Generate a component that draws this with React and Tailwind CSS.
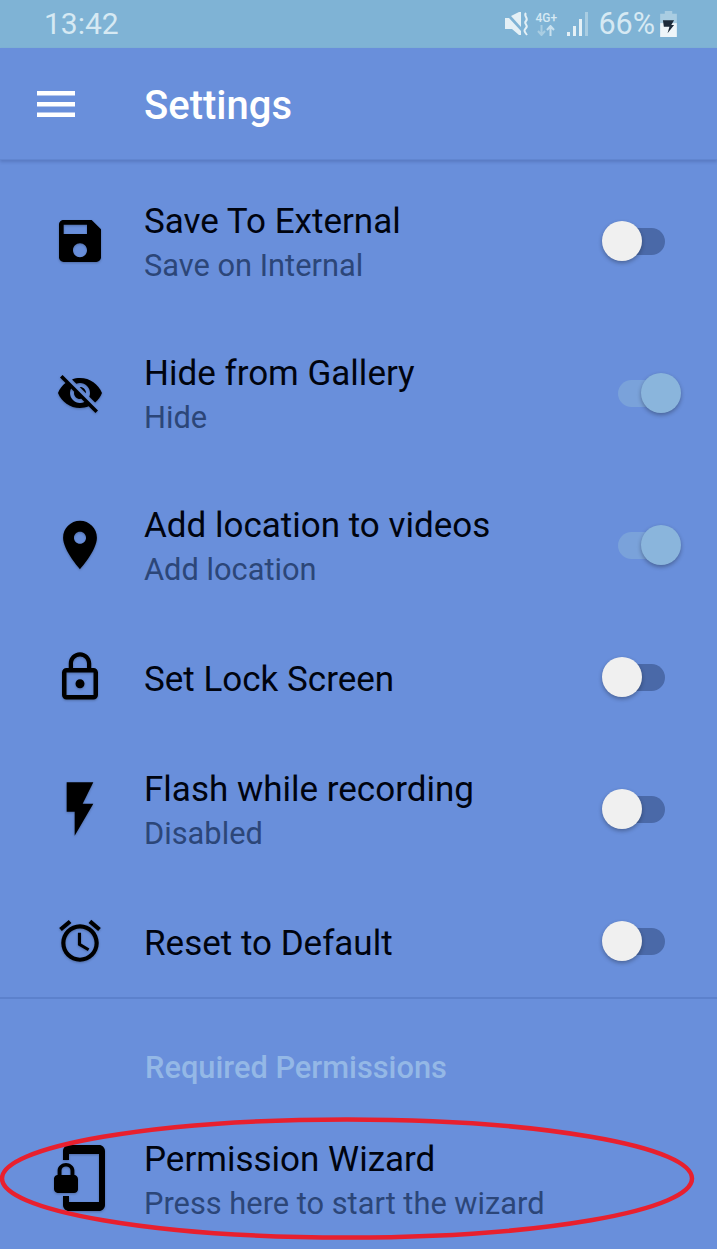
import React from 'react';

const ICONS = {
  save: 'M17 3H5c-1.11 0-2 .9-2 2v14c0 1.1.89 2 2 2h14c1.1 0 2-.9 2-2V7l-4-4zm-5 16c-1.66 0-3-1.34-3-3s1.34-3 3-3 3 1.34 3 3-1.34 3-3 3zm3-10H5V5h10v4z',
  hide: 'M12 7c2.76 0 5 2.24 5 5 0 .65-.13 1.26-.36 1.83l2.92 2.92c1.51-1.26 2.7-2.89 3.43-4.75-1.73-4.39-6-7.5-11-7.5-1.4 0-2.74.25-3.98.7l2.16 2.16C10.74 7.13 11.35 7 12 7zM2 4.27l2.28 2.28.46.46C3.08 8.3 1.78 10.02 1 12c1.73 4.39 6 7.5 11 7.5 1.55 0 3.03-.3 4.38-.84l.42.42L19.73 22 21 20.73 3.27 3 2 4.27zM7.53 9.8l1.55 1.55c-.05.21-.08.43-.08.65 0 1.66 1.34 3 3 3 .22 0 .44-.03.65-.08l1.55 1.55c-.67.33-1.41.53-2.2.53-2.76 0-5-2.24-5-5 0-.79.2-1.53.53-2.2zm4.31-.78l3.15 3.15.02-.16c0-1.66-1.34-3-3-3l-.17.01z',
  place: 'M12 2C8.13 2 5 5.13 5 9c0 5.25 7 13 7 13s7-7.75 7-13c0-3.87-3.13-7-7-7zm0 9.5c-1.38 0-2.5-1.12-2.5-2.5s1.12-2.5 2.5-2.5 2.5 1.12 2.5 2.5-1.12 2.5-2.5 2.5z',
  lock: 'M12 17c1.1 0 2-.9 2-2s-.9-2-2-2-2 .9-2 2 .9 2 2 2zm6-9h-1V6c0-2.76-2.24-5-5-5S7 3.24 7 6v2H6c-1.1 0-2 .9-2 2v10c0 1.1.9 2 2 2h12c1.1 0 2-.9 2-2V10c0-1.1-.9-2-2-2zM8.9 6c0-1.71 1.39-3.1 3.1-3.1s3.1 1.39 3.1 3.1v2H8.9V6zM18 20H6V10h12v10z',
  flash: 'M7 2v11h3v9l7-12h-4l4-8z',
  alarm: 'M22 5.72l-4.6-3.86-1.29 1.53 4.6 3.86L22 5.72zM7.88 3.39L6.6 1.86 2 5.71l1.29 1.53 4.59-3.85zM12.5 8H11v6l4.75 2.85.75-1.23-4-2.37V8zM12 4c-4.97 0-9 4.03-9 9s4.02 9 9 9c4.97 0 9-4.03 9-9s-4.03-9-9-9zm0 16c-3.87 0-7-3.13-7-7s3.13-7 7-7 7 3.13 7 7-3.13 7-7 7z',
  wizard: 'M19 1H9c-1.1 0-2 .9-2 2v3h2V4h10v16H9v-2H7v3c0 1.1.9 2 2 2h10c1.1 0 2-.9 2-2V3c0-1.1-.9-2-2-2zm-8.2 10V9.5C10.8 8.1 9.4 7 8 7S5.2 8.1 5.2 9.5V11c-.6 0-1.2.6-1.2 1.2v3.5c0 .7.6 1.3 1.2 1.3h5.5c.7 0 1.3-.6 1.3-1.2v-3.5c0-.7-.6-1.3-1.2-1.3zm-1.3 0h-3V9.5c0-.8.7-1.3 1.5-1.3s1.5.5 1.5 1.3V11z',
};

const rows = [
  { icon: 'save', size: 'w-14 h-14', title: 'Save To External', sub: 'Save on Internal', on: false },
  { icon: 'hide', size: 'w-12 h-12', title: 'Hide from Gallery', sub: 'Hide', on: true },
  { icon: 'place', size: 'w-[58px] h-[58px]', title: 'Add location to videos', sub: 'Add location', on: true },
  { icon: 'lock', size: 'w-[54px] h-[54px]', title: 'Set Lock Screen', on: false },
  { icon: 'flash', size: 'w-16 h-16', title: 'Flash while recording', sub: 'Disabled', on: false },
  { icon: 'alarm', size: 'w-[50px] h-[50px]', title: 'Reset to Default', on: false },
];

const Icon = ({ name, className }) => (
  <svg viewBox="0 0 24 24" fill="#000" className={`${className} drop-shadow-[0_1px_1px_rgba(0,0,0,0.25)]`}>
    <path d={ICONS[name]} />
  </svg>
);

const Switch = ({ on }) => (
  <div className={`relative w-[47px] h-[27px] rounded-full ${on ? 'bg-[#7aa2da]' : 'bg-[#4a69a8]'}`}>
    <div
      className={`absolute top-[-7px] w-10 h-10 rounded-full shadow-[0_2px_4px_rgba(0,0,0,0.3)] ${
        on ? 'left-[23px] bg-[#8ab5dc]' : 'left-[-16px] bg-[#f0f0f0]'
      }`}
    />
  </div>
);

const Row = ({ icon, size, title, sub, on }) => (
  <div className={`flex items-center pl-12 ${sub ? 'h-[152px]' : 'h-[112px]'}`}>
    <div className="w-16 flex items-center justify-center shrink-0">
      <Icon name={icon} className={size} />
    </div>
    <div className="ml-[32px] flex-1 pt-[5px]">
      <div className="text-[35px] leading-[44px] text-[#00040f]">{title}</div>
      {sub && <div className="text-[30.8px] leading-[44px] text-[#2c4678]">{sub}</div>}
    </div>
    <div className="mr-[52px]">
      <Switch on={on} />
    </div>
  </div>
);

const StatusBar = () => (
  <div className="h-12 bg-[#7fb3d5] flex items-center justify-between pl-[44px] pr-[40px] text-[#d6e9f3]">
    <span className="text-[30px] leading-none">13:42</span>
    <div className="flex items-center">
      {/* muted speaker */}
      <svg viewBox="0 0 25 24" className="w-[25px] h-6">
        <path d="M0 6h4l12 13v4h-2l-7-6H0z" fill="#e4f0f6" />
        <path d="M6 4l8-4h2v15z" fill="#e4f0f6" />
        <path d="M21 1c-3 3 3 5 0 8s3 4 0 7-1 4 1 7" stroke="#e4f0f6" strokeWidth="2" fill="none" />
      </svg>
      <div className="ml-[4px] flex flex-col items-center w-6">
        <span className="text-[12px] leading-[13px] font-medium">4G+</span>
        <svg viewBox="0 0 18 11" className="w-[18px] h-[11px]">
          <path d="M4.5 0v9M1 6l3.5 4L8 6" stroke="#a9cde2" strokeWidth="2" fill="none" />
          <path d="M13.5 11V2M10 5l3.5-4L17 5" stroke="#c8e0ee" strokeWidth="2" fill="none" />
        </svg>
      </div>
      <svg viewBox="0 0 22 26" className="ml-[9px] w-[22px] h-[26px]">
        <rect x="0" y="21" width="3" height="4" fill="#e4f0f6" />
        <rect x="6" y="15" width="3" height="10" fill="#e4f0f6" />
        <rect x="12" y="8" width="3" height="17" fill="#e4f0f6" />
        <rect x="18" y="1" width="3" height="24" fill="#a9cde2" />
      </svg>
      <span className="ml-[9px] text-[30.5px] leading-none">66%</span>
      <svg viewBox="0 0 18 28" className="ml-[5px] w-[17px] h-[26px]">
        <path d="M5 0h8v3h5v10H0V3h5z" fill="#a9cde2" />
        <path d="M0 13h18v15H0z" fill="#eef5f9" />
        <path d="M3 10h12l-3 5h3l-7 9 2-7H4z" fill="#1d2b3a" />
      </svg>
    </div>
  </div>
);

export default function App() {
  return (
    <div className="relative w-[717px] h-[1249px] overflow-hidden bg-[#698fdb] font-['Roboto',sans-serif]">
      <StatusBar />

      {/* App bar */}
      <div className="h-[112px] flex items-center pl-[37px] shadow-[0_2px_3px_rgba(40,60,120,0.25)] border-b border-[#6186d0]">
        <svg viewBox="0 0 38 26" className="w-[38px] h-[26px] shrink-0">
          <rect y="0" width="38" height="4.5" fill="#fff" />
          <rect y="11" width="38" height="4.5" fill="#fff" />
          <rect y="21.5" width="38" height="4.5" fill="#fff" />
        </svg>
        <span className="ml-[70px] pt-[5px] text-[40px] font-medium text-white -translate-x-[1px]">Settings</span>
      </div>

      {/* Settings list */}
      <div className="pt-[5px]">
        {rows.map((row) => (
          <Row key={row.icon} {...row} />
        ))}
      </div>

      <div className="h-[2px] bg-[#5c81cc]" />

      <div className="h-[106px] pl-[145px] pt-[49px] text-[30.8px] leading-[40px] font-medium text-[#94b8e6]">
        Required Permissions
      </div>

      <div className="h-[152px] flex items-center pl-12">
        <div className="w-16 flex items-center justify-center shrink-0 -translate-x-[2px] -translate-y-[3px]">
          <Icon name="wizard" className="w-[72px] h-[72px] shrink-0" />
        </div>
        <div className="ml-[32px] flex-1 pt-[2px]">
          <div className="text-[35px] leading-[44px] text-[#00040f]">Permission Wizard</div>
          <div className="text-[30.8px] leading-[44px] text-[#2c4678]">Press here to start the wizard</div>
        </div>
      </div>

      {/* Red annotation */}
      <svg viewBox="0 0 717 1249" className="absolute inset-0 w-[717px] h-[1249px] pointer-events-none">
        <ellipse cx="347" cy="1178.5" rx="345" ry="59" fill="none" stroke="#e8202e" strokeWidth="4.5" />
      </svg>
    </div>
  );
}
